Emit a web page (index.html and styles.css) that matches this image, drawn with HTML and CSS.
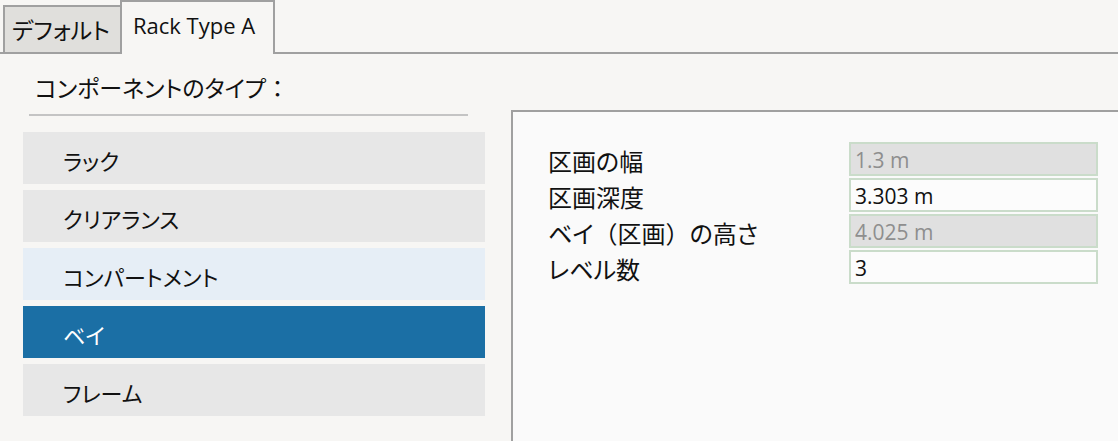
FILE: index.html
```html
<!DOCTYPE html>
<html lang="ja">
<head>
    <meta charset="UTF-8">
    <meta name="viewport" content="width=device-width, initial-scale=1.0">
    <title>Rack Type A</title>
    <link rel="stylesheet" href="styles.css">
</head>
<body>
    <div class="tabs">
        <div class="tab tab-default">デフォルト</div>
        <div class="tab tab-active">Rack Type A</div>
    </div>

    <div class="content">
        <div class="left">
            <div class="heading">コンポーネントのタイプ<span class="full">：</span></div>
            <ul class="types">
                <li class="type">ラック</li>
                <li class="type">クリアランス</li>
                <li class="type hover">コンパートメント</li>
                <li class="type selected">ベイ</li>
                <li class="type">フレーム</li>
            </ul>
        </div>

        <div class="panel">
            <div class="row">
                <label class="label">区画の幅</label>
                <input class="field" type="text" value="1.3 m" disabled>
            </div>
            <div class="row">
                <label class="label">区画深度</label>
                <input class="field" type="text" value="3.303 m">
            </div>
            <div class="row">
                <label class="label">ベイ<span class="full">（</span>区画<span class="full">）</span>の高さ</label>
                <input class="field" type="text" value="4.025 m" disabled>
            </div>
            <div class="row">
                <label class="label">レベル数</label>
                <input class="field" type="text" value="3">
            </div>
        </div>
    </div>
</body>
</html>
```

FILE: styles.css
```css
body {
    font-family: "Open Sans", "Noto Sans CJK JP", sans-serif;
    font-feature-settings: "palt";
    margin: 0;
    background-color: #f7f6f4;
    color: #111;
    height: 441px;
    overflow: hidden;
}

/* full-width punctuation, as in the original UI font */
.full {
    font-feature-settings: normal;
}

.tabs {
    display: flex;
    align-items: flex-end;
    height: 52px;
    padding-left: 3px;
    border-bottom: 2px solid #a0a0a0;
}

.tab {
    box-sizing: border-box;
    border: 2px solid #a0a0a0;
    border-bottom: none;
    display: flex;
    align-items: center;
}

.tab-default {
    width: 117px;
    height: 47px;
    border-right: none;
    padding-left: 7px;
    padding-bottom: 2px;
    background-color: #e0dfdc;
    font-size: 23px;
}

.tab-active {
    width: 155px;
    height: 54px;
    margin-bottom: -2px;
    padding-left: 11px;
    padding-bottom: 6px;
    background-color: #f7f6f4;
    font-size: 22px;
}

.content {
    display: flex;
    height: 387px;
}

.left {
    width: 511px;
    flex-shrink: 0;
}

.heading {
    margin: 18px 0 0 29px;
    width: 439px;
    box-sizing: border-box;
    padding: 0 0 10px 6px;
    line-height: 32px;
    font-size: 23px;
    border-bottom: 2px solid #c4c4c4;
}

.types {
    list-style: none;
    margin: 16px 0 0 23px;
    padding: 0;
    width: 462px;
    display: flex;
    flex-direction: column;
    gap: 6px;
}

.type {
    height: 52px;
    box-sizing: border-box;
    padding: 4px 0 0 40px;
    display: flex;
    align-items: center;
    font-size: 22px;
    background-color: #e7e7e7;
}

.type.hover {
    background-color: #e6eef6;
}

.type.selected {
    background-color: #1b6fa5;
    color: #fff;
}

.panel {
    flex: 1;
    margin-top: 56px;
    border-top: 2px solid #a0a0a0;
    border-left: 2px solid #a0a0a0;
    background-color: #fafafa;
    padding: 30px 0 0 35px;
    display: flex;
    flex-direction: column;
    gap: 2px;
}

.row {
    display: flex;
    align-items: center;
    height: 34px;
}

.label {
    width: 301px;
    font-size: 24px;
    padding-top: 2px;
}

.field {
    box-sizing: border-box;
    width: 249px;
    height: 34px;
    margin: 0;
    padding: 2px 0 0 4px;
    border: 2px solid #cadcca;
    border-radius: 0;
    background-color: #fcfcfc;
    font-family: "Open Sans", sans-serif;
    font-size: 21px;
    color: #111;
    outline: none;
}

.field:disabled {
    background-color: #e0e0e0;
    color: #8e8e8e;
}
```
